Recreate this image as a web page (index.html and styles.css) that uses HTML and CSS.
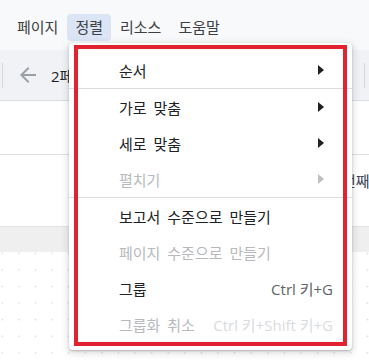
FILE: index.html
```html
<!DOCTYPE html>
<html lang="ko">
<head>
<meta charset="utf-8">
<link rel="stylesheet" href="styles.css">
</head>
<body>
<div class="app">
  <div class="menubar">
    <span class="mb-item">페이지</span>
    <span class="mb-item active">정렬</span>
    <span class="mb-item">리소스</span>
    <span class="mb-item">도움말</span>
  </div>
  <div class="toolbar">
    <span class="vsep"></span>
    <svg class="back" width="24" height="24" viewBox="0 0 24 24"><path d="M20 11H7.83l5.59-5.59L12 4l-8 8 8 8 1.41-1.41L7.83 13H20v-2z" fill="#9aa0a6"/></svg>
    <span class="tb-text">2페</span>
    <span class="vsep end"></span>
  </div>
  <div class="panel1"></div>
  <div class="panel2"><span class="ptext">번째</span></div>
  <div class="band"></div>
  <div class="canvas"></div>
</div>

<div class="menu">
  <div class="item"><span class="label">순서</span><svg class="sub" width="6" height="10" viewBox="0 0 6 10"><path d="M0 0L6 5L0 10Z"/></svg></div>
  <div class="sep"></div>
  <div class="item"><span class="label">가로 맞춤</span><svg class="sub" width="6" height="10" viewBox="0 0 6 10"><path d="M0 0L6 5L0 10Z"/></svg></div>
  <div class="item"><span class="label">세로 맞춤</span><svg class="sub" width="6" height="10" viewBox="0 0 6 10"><path d="M0 0L6 5L0 10Z"/></svg></div>
  <div class="item disabled"><span class="label">펼치기</span><svg class="sub" width="6" height="10" viewBox="0 0 6 10"><path d="M0 0L6 5L0 10Z"/></svg></div>
  <div class="sep"></div>
  <div class="item"><span class="label">보고서 수준으로 만들기</span></div>
  <div class="item disabled"><span class="label">페이지 수준으로 만들기</span></div>
  <div class="item"><span class="label">그룹</span><span class="shortcut">Ctrl 키+G</span></div>
  <div class="item disabled"><span class="label">그룹화 취소</span><span class="shortcut">Ctrl 키+Shift 키+G</span></div>
  <div class="highlight"></div>
</div>
</body>
</html>
```

FILE: styles.css
```css
html, body {
  margin: 0;
  padding: 0;
}
body {
  width: 369px;
  height: 362px;
  overflow: hidden;
  position: relative;
  font-family: "Open Sans", "Noto Sans CJK KR", sans-serif;
  color: #202124;
  background: #ffffff;
}
.app {
  display: flex;
  flex-direction: column;
  height: 362px;
}
.menubar {
  height: 50px;
  background: #f8f9fa;
  display: flex;
  align-items: center;
  gap: 1px;
  padding-left: 9px;
  box-sizing: border-box;
}
.mb-item {
  font-size: 15px;
  line-height: 27px;
  padding: 0 8px;
  border-radius: 4px;
  color: #3c4043;
  margin-top: 5px;
}
.mb-item.active {
  background: #dce5f6;
}
.toolbar {
  height: 50px;
  background: #f0f2f6;
  border-bottom: 1px solid #dadce0;
  display: flex;
  align-items: center;
}
.vsep {
  width: 1px;
  height: 25px;
  background: #d4d7db;
  margin-left: 2px;
}
.vsep.end {
  margin-left: auto;
  margin-right: 4px;
}
.back {
  margin-left: 13px;
}
.tb-text {
  margin-left: 11px;
  white-space: nowrap;
  font-size: 15px;
  color: #202124;
}
.panel1 {
  height: 53px;
  border-bottom: 1px solid #dedfe1;
  background: #ffffff;
}
.panel2 {
  height: 71px;
  background: #ffffff;
  display: flex;
  align-items: center;
  white-space: nowrap;
}
.ptext {
  margin-left: 342px;
  font-size: 15px;
  color: #3c4356;
  margin-top: -20px;
}
.band {
  height: 25px;
  background: #efefef;
  border-top: 1px solid #e2e2e2;
}
.canvas {
  flex: 1;
  background-color: #ffffff;
  background-image: radial-gradient(circle, #d9d9d9 0.7px, transparent 1.1px);
  background-size: 16.6px 16.6px;
  background-position: -6px -7px;
}

.menu {
  position: absolute;
  left: 69px;
  top: 43px;
  width: 283px;
  box-sizing: border-box;
  padding: 9px 0 8px;
  background: #ffffff;
  border-radius: 4px;
  box-shadow: 0 2px 6px 2px rgba(60, 64, 67, 0.15), 0 1px 2px rgba(60, 64, 67, 0.3);
}
.item {
  height: 36px;
  display: flex;
  align-items: center;
  padding: 0 19px 0 50px;
  font-size: 15px;
  color: #202124;
  white-space: nowrap;
}
.item .label {
  word-spacing: 3px;
}
.item .sub {
  margin-left: auto;
  margin-right: 9px;
  fill: #202124;
}
.item .shortcut {
  margin-left: auto;
  color: #5f6368;
}
.item.disabled {
  color: #b7b9bd;
}
.item.disabled .sub {
  fill: #bdc1c6;
}
.item.disabled .shortcut {
  color: #dadce0;
}
.sep {
  height: 1px;
  background: #dadce0;
}
.highlight {
  position: absolute;
  left: 5px;
  right: 5px;
  top: 2px;
  bottom: 4px;
  border: 4px solid #e1222f;
  pointer-events: none;
}
```
